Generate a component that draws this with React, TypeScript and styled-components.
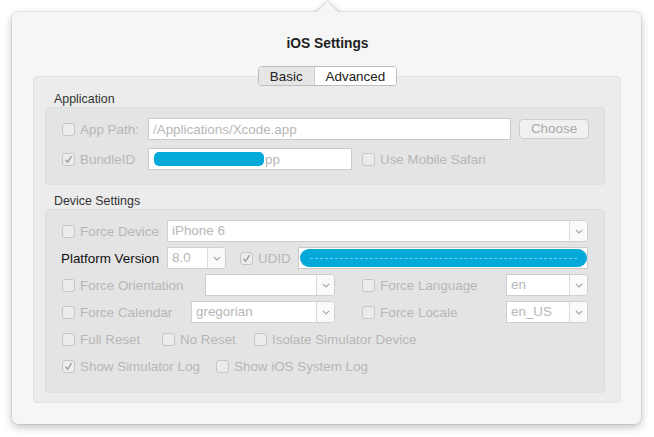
import React from 'react';
import styled, { createGlobalStyle } from 'styled-components';

const GlobalStyle = createGlobalStyle`
  html, body {
    margin: 0;
    padding: 0;
    background: #ffffff;
  }
  body {
    font-family: 'Liberation Sans', Arial, sans-serif;
    font-size: 13px;
    -webkit-font-smoothing: antialiased;
  }
`;

const DISABLED = '#b7b7b7';
const BLUE = '#02a9d9';
const TEXT_SIZE = '13.4px';

function CheckMark() {
  return (
    <svg width='9' height='9' viewBox='0 0 9 9'>
      <polyline points='1.5,4.8 3.6,7.2 7.6,1.2' fill='none' stroke='#9c9c9c' strokeWidth='1.3' />
    </svg>
  );
}

function Chevron() {
  return (
    <svg width='8' height='5' viewBox='0 0 8 5'>
      <polyline points='0.8,0.8 4,4 7.2,0.8' fill='none' stroke='#a5a5a5' strokeWidth='1.1' />
    </svg>
  );
}

type CheckProps = { label: string; checked?: boolean; width?: number };

function CheckItem({ label, checked, width }: CheckProps) {
  return (
    <CheckWrap width={width}>
      <Box13>{checked && <CheckMark />}</Box13>
      <CheckText>{label}</CheckText>
    </CheckWrap>
  );
}

type SelectProps = { value?: string; width?: number };

function Select({ value, width }: SelectProps) {
  return (
    <SelectWrap width={width}>
      <SelectValue>{value}</SelectValue>
      <SelectArrow>
        <Chevron />
      </SelectArrow>
    </SelectWrap>
  );
}

export default function App() {
  return (
    <Page>
      <GlobalStyle />
      <Popover>
        <Arrow />
        <Title>iOS Settings</Title>
        <Tabs>
          <Tab active>Basic</Tab>
          <Tab>Advanced</Tab>
        </Tabs>
        <Outer>
          <SectionLabel>Application</SectionLabel>
          <Group>
            <Row>
              <CheckItem label='App Path:' width={86} />
              <TextField grow>/Applications/Xcode.app</TextField>
              <Button>Choose</Button>
            </Row>
            <Row>
              <CheckItem label='BundleID' checked width={86} />
              <TextField width={204}>
                <Redact />
                pp
              </TextField>
              <Spacer w={10} />
              <CheckItem label='Use Mobile Safari' />
            </Row>
          </Group>

          <SectionLabel top={9}>Device Settings</SectionLabel>
          <Group device>
            <Row>
              <CheckItem label='Force Device' width={105} />
              <Select value='iPhone 6' />
            </Row>
            <Row>
              <PlainLabel>Platform Version</PlainLabel>
              <Select value='8.0' width={59} />
              <Spacer w={14} />
              <CheckItem label='UDID' checked width={58} />
              <TextField grow>
                <UdidBlob>
                  <Dashes />
                </UdidBlob>
              </TextField>
            </Row>
            <Row>
              <CheckItem label='Force Orientation' width={143} />
              <Select width={130} />
              <Spacer w={27} />
              <CheckItem label='Force Language' width={144} />
              <Select value='en' />
            </Row>
            <Row>
              <CheckItem label='Force Calendar' width={129} />
              <Select value='gregorian' width={144} />
              <Spacer w={27} />
              <CheckItem label='Force Locale' width={144} />
              <Select value='en_US' />
            </Row>
            <Row>
              <CheckItem label='Full Reset' width={100} />
              <CheckItem label='No Reset' width={92} />
              <CheckItem label='Isolate Simulator Device' />
            </Row>
            <Row>
              <CheckItem label='Show Simulator Log' checked width={154} />
              <CheckItem label='Show iOS System Log' />
            </Row>
          </Group>
        </Outer>
      </Popover>
    </Page>
  );
}

const Page = styled.div`
  padding: 12px 13px 13px 12px;
`;

const Popover = styled.div`
  position: relative;
  width: 629px;
  height: 412px;
  box-sizing: border-box;
  padding: 24px 20px 21px 21px;
  background: #f6f6f6;
  border-radius: 6px;
  box-shadow: 0 0 0 0.5px rgba(0, 0, 0, 0.12), 0 3px 9px rgba(0, 0, 0, 0.25);
  display: flex;
  flex-direction: column;
`;

const Arrow = styled.div`
  position: absolute;
  top: -12px;
  left: 301px;
  width: 28px;
  height: 12px;
  overflow: hidden;

  &::after {
    content: '';
    position: absolute;
    left: 4.5px;
    top: 5px;
    width: 19px;
    height: 19px;
    background: #f6f6f6;
    transform: rotate(45deg);
    box-shadow: 0 0 0 0.5px rgba(0, 0, 0, 0.12), 0 0 5px rgba(0, 0, 0, 0.18);
  }
`;

const Title = styled.div`
  text-align: center;
  font-weight: bold;
  font-size: 13.8px;
  line-height: 16px;
  color: #1e1e1e;
  margin-left: 1px;
`;

const Tabs = styled.div`
  align-self: center;
  display: flex;
  margin-top: 14px;
  margin-left: 1px;
  height: 21px;
  box-sizing: border-box;
  border: 1px solid #bdbdbd;
  border-radius: 4px;
  overflow: hidden;
  position: relative;
  z-index: 1;
  background: #fff;
`;

const Tab = styled.div<{ active?: boolean }>`
  padding: 0 11px;
  line-height: 19px;
  font-size: ${TEXT_SIZE};
  color: #222;
  background: ${(p) => (p.active ? '#e6e6e6' : '#ffffff')};
  border-right: ${(p) => (p.active ? '1px solid #cfcfcf' : 'none')};
`;

const Outer = styled.div`
  margin-top: -10px;
  flex: 1;
  background: #ececec;
  border: 1px solid #e2e2e2;
  border-radius: 4px;
  padding: 15px 15px 9px 11px;
  display: flex;
  flex-direction: column;
`;

const SectionLabel = styled.div<{ top?: number }>`
  margin: ${(p) => p.top ?? 0}px 0 0 9px;
  line-height: 15px;
  font-size: 12.4px;
  color: #333;
`;

const Group = styled.div<{ device?: boolean }>`
  background: #e4e4e4;
  border: 1px solid #dedede;
  border-radius: 4px;
  padding: ${(p) => (p.device ? '10px 16px 15px 16px' : '10px 15px 14px 16px')};
  display: flex;
  flex-direction: column;
  gap: ${(p) => (p.device ? 5 : 8)}px;
  flex: ${(p) => (p.device ? 1 : 'none')};
`;

const Row = styled.div`
  display: flex;
  align-items: center;
  height: 22px;
  gap: 8px;
  & > * {
    flex-shrink: 0;
  }
`;

const CheckWrap = styled.div<{ width?: number }>`
  display: flex;
  align-items: center;
  gap: 5px;
  width: ${(p) => (p.width ? `${p.width}px` : 'auto')};
  margin-right: ${(p) => (p.width ? '-8px' : '0')};
`;

const Box13 = styled.div`
  width: 13px;
  height: 13px;
  box-sizing: border-box;
  border: 1px solid #c6c6c6;
  border-radius: 3px;
  background: #ececec;
  display: flex;
  align-items: center;
  justify-content: center;
`;

const CheckText = styled.span`
  color: ${DISABLED};
  font-size: ${TEXT_SIZE};
  white-space: nowrap;
`;

const PlainLabel = styled.div`
  width: 106px;
  margin-left: -1px;
  margin-right: -8px;
  color: #111;
  font-size: ${TEXT_SIZE};
  white-space: nowrap;
`;

/* total gap between its neighbours is w (row gap is 8 on each side) */
const Spacer = styled.div<{ w: number }>`
  width: 0;
  margin-right: ${(p) => p.w - 16}px;
`;

const TextField = styled.div<{ width?: number; grow?: boolean }>`
  height: 22px;
  box-sizing: border-box;
  border: 1px solid #cacaca;
  background: #fff;
  padding: 0 4px;
  display: flex;
  align-items: center;
  color: ${DISABLED};
  font-size: ${TEXT_SIZE};
  white-space: nowrap;
  overflow: hidden;
  width: ${(p) => (p.width ? `${p.width}px` : 'auto')};
  flex: ${(p) => (p.grow ? '1 1 0' : 'none')} !important;
  min-width: 0;
`;

const Button = styled.div`
  width: 70px;
  height: 20px;
  box-sizing: border-box;
  border: 1px solid #cdcdcd;
  border-radius: 4px;
  background: #f1f1f1;
  color: #a9a9a9;
  font-size: ${TEXT_SIZE};
  text-align: center;
  line-height: 18px;
`;

const Redact = styled.span`
  display: inline-block;
  width: 110px;
  height: 14px;
  background: ${BLUE};
  border-radius: 5px;
  margin-left: 1px;
  margin-right: 1px;
`;

const UdidBlob = styled.div`
  flex: 1;
  height: 18px;
  margin: 0 -4px 0 -3px;
  background: ${BLUE};
  border-radius: 9px;
  display: flex;
  align-items: center;
  padding: 0 10px;
`;

const Dashes = styled.div`
  flex: 1;
  border-top: 1px dashed rgba(255, 255, 255, 0.45);
`;

const SelectWrap = styled.div<{ width?: number }>`
  height: 22px;
  box-sizing: border-box;
  display: flex;
  border: 1px solid #cfcfcf;
  border-radius: 0 4px 4px 0;
  background: #fff;
  width: ${(p) => (p.width ? `${p.width}px` : 'auto')};
  flex: ${(p) => (p.width ? 'none' : '1 1 0')} !important;
`;

const SelectValue = styled.div`
  flex: 1;
  padding-left: 4px;
  line-height: 20px;
  color: ${DISABLED};
  font-size: ${TEXT_SIZE};
  white-space: nowrap;
  overflow: hidden;
`;

const SelectArrow = styled.div`
  width: 17px;
  border-left: 1px solid #dadada;
  background: #fafafa;
  border-radius: 0 3px 3px 0;
  display: flex;
  align-items: center;
  justify-content: center;
`;
